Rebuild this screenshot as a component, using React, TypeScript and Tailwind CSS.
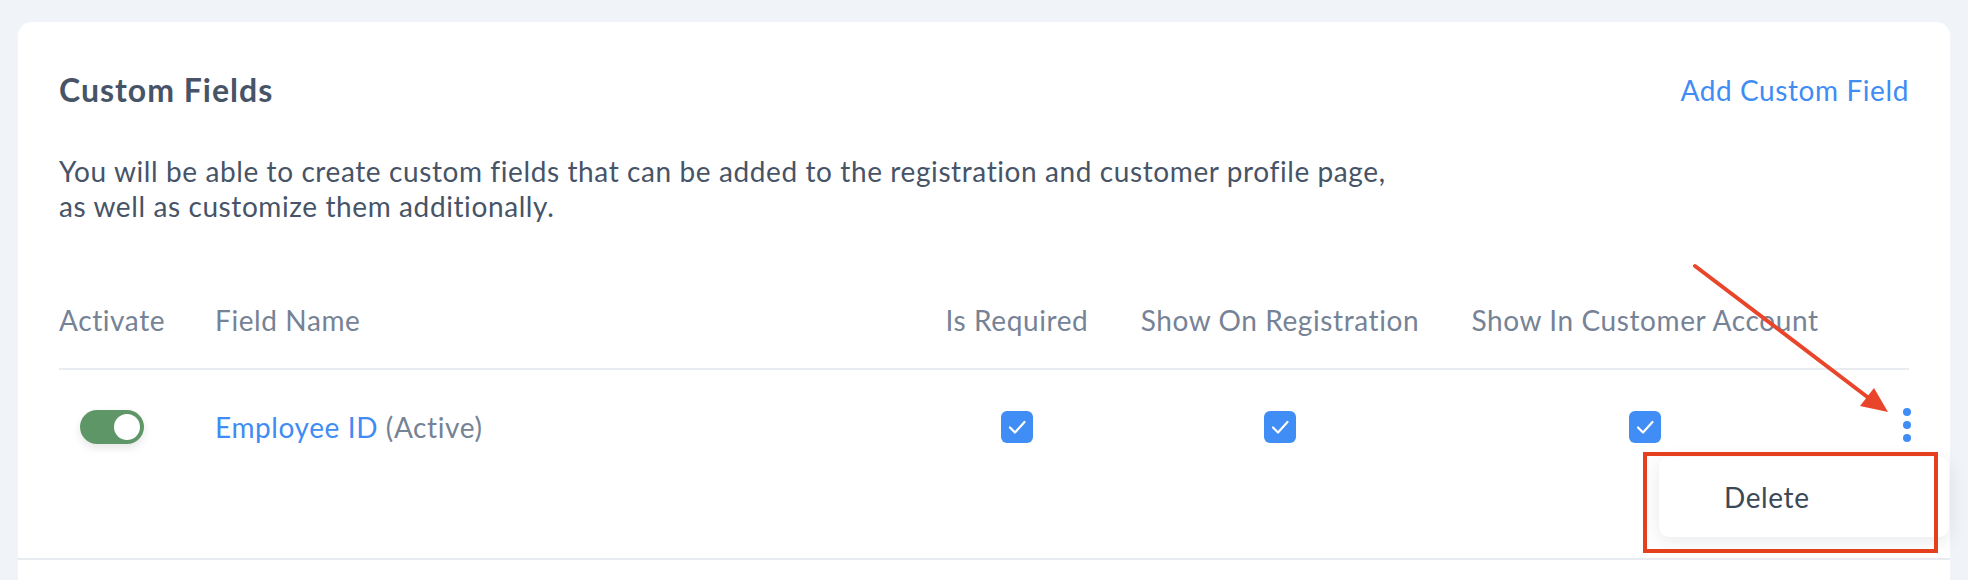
import React from "react";

function Check() {
  return (
    <div className="w-[32px] h-[32px] rounded-[6px] bg-[#408ef5] flex items-center justify-center">
      <svg width="32" height="32" viewBox="0 0 32 32" fill="none">
        <path d="M9 16.5 L14 21.5 L23.5 11" stroke="white" strokeWidth="2.2" strokeLinecap="round" strokeLinejoin="round" />
      </svg>
    </div>
  );
}

export default function App() {
  return (
    <div className="relative w-[1968px] h-[580px] overflow-hidden bg-[#f0f3f7] pt-[22px] px-[18px] font-['Lato',sans-serif] tracking-[0.6px]">
      <div className="bg-white rounded-t-[14px] h-[620px]">
        <section className="border-b-2 border-[#e8ebf0] px-[41px] pt-[48px]">
          <div className="flex justify-between items-center h-[40px]">
            <h2 className="text-[32px] font-bold text-[#475467] leading-[40px] tracking-[1px]">Custom Fields</h2>
            <a className="text-[28px] text-[#3f8cf4] leading-[40px]">Add Custom Field</a>
          </div>
          <p className="mt-[44px] text-[28px] leading-[35px] text-[#475467]">
            You will be able to create custom fields that can be added to the registration and customer profile page,
            <br />
            as well as customize them additionally.
          </p>
          <div className="mt-[76px] grid grid-cols-[156px_1fr_180px_346px_384px_72px] items-center h-[40px] text-[28px] leading-[40px] text-[#768295]">
            <div>Activate</div>
            <div>Field Name</div>
            <div className="text-center">Is Required</div>
            <div className="text-center">Show On Registration</div>
            <div className="text-center">Show In Customer Account</div>
            <div />
          </div>
          <div className="mt-[28px] border-t-2 border-[#e8ebf0]" />
          <div className="relative h-[188px] pt-[40px]">
            <div className="grid grid-cols-[156px_1fr_180px_346px_384px_72px] items-center h-[34px] text-[28px] leading-[34px]">
              <div className="pl-[21px]">
                <div className="w-[64px] h-[34px] rounded-full bg-[#5f9668] flex items-center justify-end pr-[4px] shadow-[0_4px_8px_rgba(0,0,0,0.10)]">
                  <div className="w-[26px] h-[26px] rounded-full bg-white" />
                </div>
              </div>
              <div>
                <span className="text-[#3f8cf4]">Employee ID</span>{" "}
                <span className="text-[#768295]">(Active)</span>
              </div>
              <div className="flex justify-center"><Check /></div>
              <div className="flex justify-center"><Check /></div>
              <div className="flex justify-center"><Check /></div>
              <div className="flex justify-end -mr-[2px]">
                <div className="flex flex-col gap-[5px] -mt-[5px]">
                  <span className="block w-[8px] h-[8px] rounded-full bg-[#408ef5]" />
                  <span className="block w-[8px] h-[8px] rounded-full bg-[#408ef5]" />
                  <span className="block w-[8px] h-[8px] rounded-full bg-[#408ef5]" />
                </div>
              </div>
            </div>
            <div className="absolute top-[87px] right-[-40px] w-[290px] h-[80px] rounded-[10px] bg-white shadow-[0_4px_18px_rgba(30,40,60,0.10)] flex items-center pl-[65px] text-[28px] text-[#3c4858]">
              Delete
            </div>
          </div>
        </section>
      </div>
      <div className="absolute left-[1643px] top-[452px] w-[295px] h-[101px] border-[4px] border-[#e5401e]" />
      <svg className="absolute left-0 top-0 pointer-events-none" width="1968" height="580" viewBox="0 0 1968 580">
        <line x1="1695" y1="266" x2="1870" y2="399" stroke="#e8452a" strokeWidth="4" strokeLinecap="round" />
        <polygon points="1888,412 1860,406 1874,388" fill="#e8452a" />
      </svg>
    </div>
  );
}
